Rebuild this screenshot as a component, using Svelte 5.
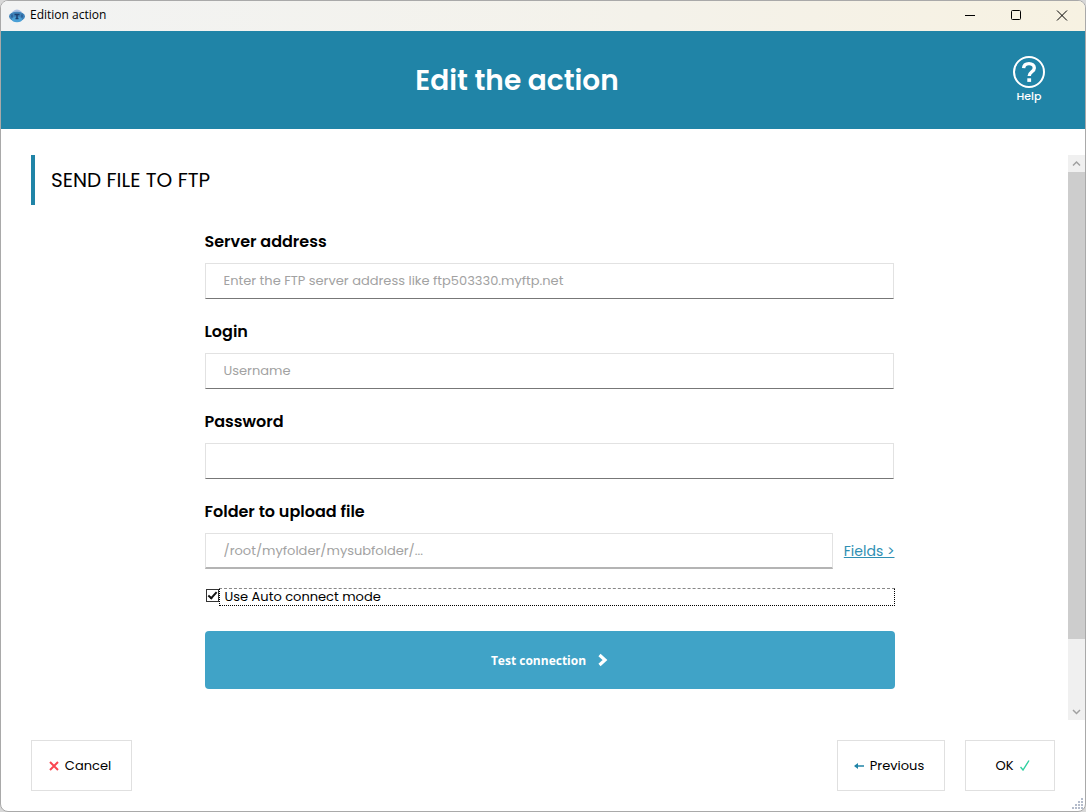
<script>
	const fields = [
		{ id: 'server', label: 'Server address', type: 'text', placeholder: 'Enter the FTP server address like ftp503330.myftp.net' },
		{ id: 'login', label: 'Login', type: 'text', placeholder: 'Username' },
		{ id: 'password', label: 'Password', type: 'password', placeholder: '' }
	];

	let values = $state({ server: '', login: '', password: '' });
	let folder = $state('');
	let autoConnect = $state(true);

	// visible part of the scrolled form, in percent
	const visible = 88;
</script>

<div class="window">
	<!-- Title bar -->
	<div class="titlebar">
		<svg class="app-icon" width="16" height="14" viewBox="0 0 16 14">
			<ellipse cx="8" cy="6.500" rx="5.500" ry="6" fill="#a9bfe4" />
			<ellipse cx="8" cy="7.500" rx="8" ry="4.800" fill="#3f83ba" />
			<ellipse cx="8" cy="10.500" rx="5" ry="2.800" fill="#4aa0d6" />
			<path d="M5.500 5.500h5M8 5.500v4M6.500 9.500h3" stroke="#1c3f70" stroke-width="1.500" fill="none" />
			<path d="M3 5.500v3M13 5.500v3" stroke="#2a5c94" stroke-width="1.500" />
		</svg>
		<span class="caption">Edition action</span>
		<button type="button" class="sys" aria-label="Minimize">
			<svg width="12" height="12" viewBox="0 0 12 12"><path d="M1 5.500h10" /></svg>
		</button>
		<button type="button" class="sys" aria-label="Maximize">
			<svg width="12" height="12" viewBox="0 0 12 12"><rect x="1.500" y="0.500" width="9" height="9" rx="1" /></svg>
		</button>
		<button type="button" class="sys" aria-label="Close">
			<svg width="12" height="12" viewBox="0 0 12 12"><path d="M1 0.500l10 10M11 0.500l-10 10" /></svg>
		</button>
	</div>

	<header>
		<h1>Edit the action</h1>
		<button type="button" class="help">
			<svg width="32" height="32" viewBox="0 0 32 32">
				<circle cx="16" cy="16" r="15" fill="none" stroke="#fff" stroke-width="2" />
				<path d="M10.600 12.200C10.800 9 13 7.600 16 7.600c3.200 0 5.300 1.700 5.300 4.300 0 3.800-5.100 3.900-5.100 8.100" fill="none" stroke="#fff" stroke-width="3.400" />
				<rect x="14.300" y="22.300" width="3.800" height="3.600" fill="#fff" />
			</svg>
			Help
		</button>
	</header>

	<main>
		<div class="content">
			<h2>SEND FILE TO FTP</h2>

			<form id="ftp" onsubmit={(e) => e.preventDefault()}>
				{#each fields as field}
					<div class="field">
						<label for={field.id}>{field.label}</label>
						<input id={field.id} type={field.type} placeholder={field.placeholder} bind:value={values[field.id]} />
					</div>
				{/each}

				<div class="field folder">
					<label for="folder">Folder to upload file</label>
					<div class="row">
						<input id="folder" type="text" placeholder="/root/myfolder/mysubfolder/..." bind:value={folder} />
						<a href="#fields">Fields &gt;</a>
					</div>
				</div>

				<div class="check">
					<input id="auto" type="checkbox" bind:checked={autoConnect} />
					<label for="auto">Use Auto connect mode</label>
				</div>

				<button type="button" class="test">
					Test connection
					<svg width="10" height="14" viewBox="0 0 10 14">
						<path d="M1.500 2l5.500 5-5.500 5" fill="none" stroke="#fff" stroke-width="3.200" />
					</svg>
				</button>
			</form>
		</div>

		<!-- Scrollbar -->
		<div class="scrollbar" aria-hidden="true">
			<svg width="17" height="17" viewBox="0 0 17 17"><path d="M5 10.500l3.500-3.500 3.500 3.500" /></svg>
			<div class="track">
				<div class="thumb" style="height: {visible}%"></div>
			</div>
			<svg width="17" height="17" viewBox="0 0 17 17"><path d="M5 7l3.500 3.500L12 7" /></svg>
		</div>
	</main>

	<footer>
		<button type="button" class="cancel">
			<svg width="10" height="10" viewBox="0 0 10 10">
				<path d="M1 1l8 8M9 1L1 9" stroke="#fa4650" stroke-width="2" />
			</svg>
			Cancel
		</button>
		<button type="button" class="previous">
			<svg width="10" height="8" viewBox="0 0 10 8">
				<path d="M1 4h9" stroke="#2084a7" stroke-width="1.500" />
				<path d="M0 4l4-3v6z" fill="#2084a7" />
			</svg>
			Previous
		</button>
		<button type="submit" form="ftp" class="ok">
			OK
			<svg width="10" height="11" viewBox="0 0 10 11">
				<path d="M0.500 7l2.500 3L9 0.500" fill="none" stroke="#2fd0a0" stroke-width="1.400" />
			</svg>
		</button>
	</footer>

	<svg class="grip" width="12" height="12" viewBox="0 0 12 12">
		{#each [[9, 0], [6, 3], [9, 3], [3, 6], [6, 6], [9, 6], [0, 9], [3, 9], [6, 9], [9, 9]] as [x, y]}
			<rect {x} {y} width="2" height="2" fill="#b4bccb" />
		{/each}
	</svg>
</div>

<style>
	:global(body) {
		margin: 0;
		background: #d8d8d8;
	}

	.window {
		position: relative;
		display: flex;
		flex-direction: column;
		box-sizing: border-box;
		min-height: 100vh;
		border: 1px solid #a9a9a9;
		border-radius: 8px;
		overflow: hidden;
		background: #fff;
		color: #000;
		font-family: Poppins, Inter, sans-serif;
		font-size: 13px;
	}

	button {
		font: inherit;
		color: inherit;
		cursor: pointer;
	}

	.titlebar {
		display: flex;
		align-items: center;
		height: 30px;
		padding-left: 8px;
		background: linear-gradient(90deg, #f2f3f3, #f4f2ea 60%, #f7f2e2);
		font-family: 'Segoe UI', 'Open Sans', sans-serif;
		font-size: 12px;
	}

	.caption {
		flex: 1;
		margin-left: 5px;
		line-height: 14px;
		padding-bottom: 2px;
	}

	.sys {
		display: flex;
		align-items: center;
		justify-content: center;
		width: 46px;
		height: 30px;
		padding: 0;
		border: none;
		background: none;
	}

	.sys svg {
		fill: none;
		stroke: #000;
	}

	header {
		display: flex;
		align-items: center;
		gap: 10px;
		height: 98px;
		padding: 0 40px 0 30px;
		background: #2084a7;
		color: #fff;
	}

	h1 {
		flex: 1;
		margin: 0;
		padding-top: 2px;
		font-size: 28px;
		font-weight: 600;
		text-align: center;
	}

	.help {
		display: flex;
		flex-direction: column;
		align-items: center;
		width: 32px;
		padding: 0;
		border: none;
		background: none;
		font-size: 11px;
		font-weight: 500;
		line-height: 16px;
	}

	main {
		display: flex;
		flex: 1;
		padding: 26px 0 20px 30px;
	}

	.content {
		flex: 1;
	}

	h2 {
		margin: 0;
		padding-left: 16px;
		border-left: 4px solid #2084a7;
		font-size: 20px;
		font-weight: 400;
		line-height: 50px;
	}

	form {
		max-width: 690px;
		margin: 24px auto 0;
	}

	.field {
		display: flex;
		flex-direction: column;
		gap: 9px;
		margin-bottom: 20px;
		padding-right: 1px;
	}

	.field label {
		font-size: 16px;
		font-weight: 600;
		line-height: 25px;
	}

	.field input {
		box-sizing: border-box;
		width: 100%;
		height: 36px;
		padding: 0 18px;
		border: 1px solid #e2e2e2;
		border-bottom-color: #777;
		outline: none;
		font: inherit;
	}

	.field input::placeholder {
		color: #a2a2a2;
		opacity: 1;
	}

	.folder {
		margin-bottom: 19px;
		padding-right: 0;
	}

	.row {
		display: flex;
		align-items: center;
		gap: 11px;
	}

	.row input {
		flex: 1;
		border-bottom: 2px solid #b4b4b4;
	}

	a {
		color: #2f8fb3;
		font-size: 14px;
		white-space: nowrap;
	}

	.check {
		display: flex;
		align-items: flex-start;
		margin-bottom: 25px;
	}

	.check input {
		display: grid;
		place-items: center;
		appearance: none;
		box-sizing: border-box;
		width: 13px;
		height: 13px;
		margin: 1px 0 0 1px;
		border: 1px solid #333;
		background: #fff;
	}

	.check input:checked::before {
		content: '';
		box-sizing: border-box;
		width: 9px;
		height: 5px;
		border-left: 2px solid #111;
		border-bottom: 2px solid #111;
		transform: translateY(-1px) rotate(-48deg);
	}

	.check label {
		flex: 1;
		padding-left: 5px;
		border: 1px dotted #000;
		border-top: 1px dashed #888;
		line-height: 16px;
	}

	.test {
		display: flex;
		align-items: center;
		justify-content: center;
		gap: 12px;
		width: 100%;
		height: 58px;
		border: none;
		border-radius: 4px;
		background: #40a3c7;
		color: #fff;
		font-family: 'Segoe UI', 'Open Sans', sans-serif;
		font-size: 12px;
		font-weight: 700;
	}

	.scrollbar {
		display: flex;
		flex-direction: column;
		width: 17px;
		background: #f0f0f0;
	}

	.scrollbar path {
		fill: none;
		stroke: #a0a0a0;
		stroke-width: 1.5;
	}

	.track {
		flex: 1;
	}

	.thumb {
		background: #cdcdcd;
	}

	footer {
		display: flex;
		gap: 20px;
		padding: 0 30px 20px;
	}

	footer button {
		display: flex;
		align-items: center;
		justify-content: center;
		gap: 6px;
		height: 51px;
		padding: 0;
		border: 1px solid #e0e0e0;
		background: #fff;
	}

	.cancel {
		width: 101px;
		margin-right: auto;
		padding-right: 3px;
	}

	.previous {
		width: 108px;
		padding-right: 4px;
	}

	.ok {
		width: 90px;
		padding-left: 5px;
	}

	.grip {
		position: absolute;
		right: 1px;
		bottom: 1px;
	}
</style>
